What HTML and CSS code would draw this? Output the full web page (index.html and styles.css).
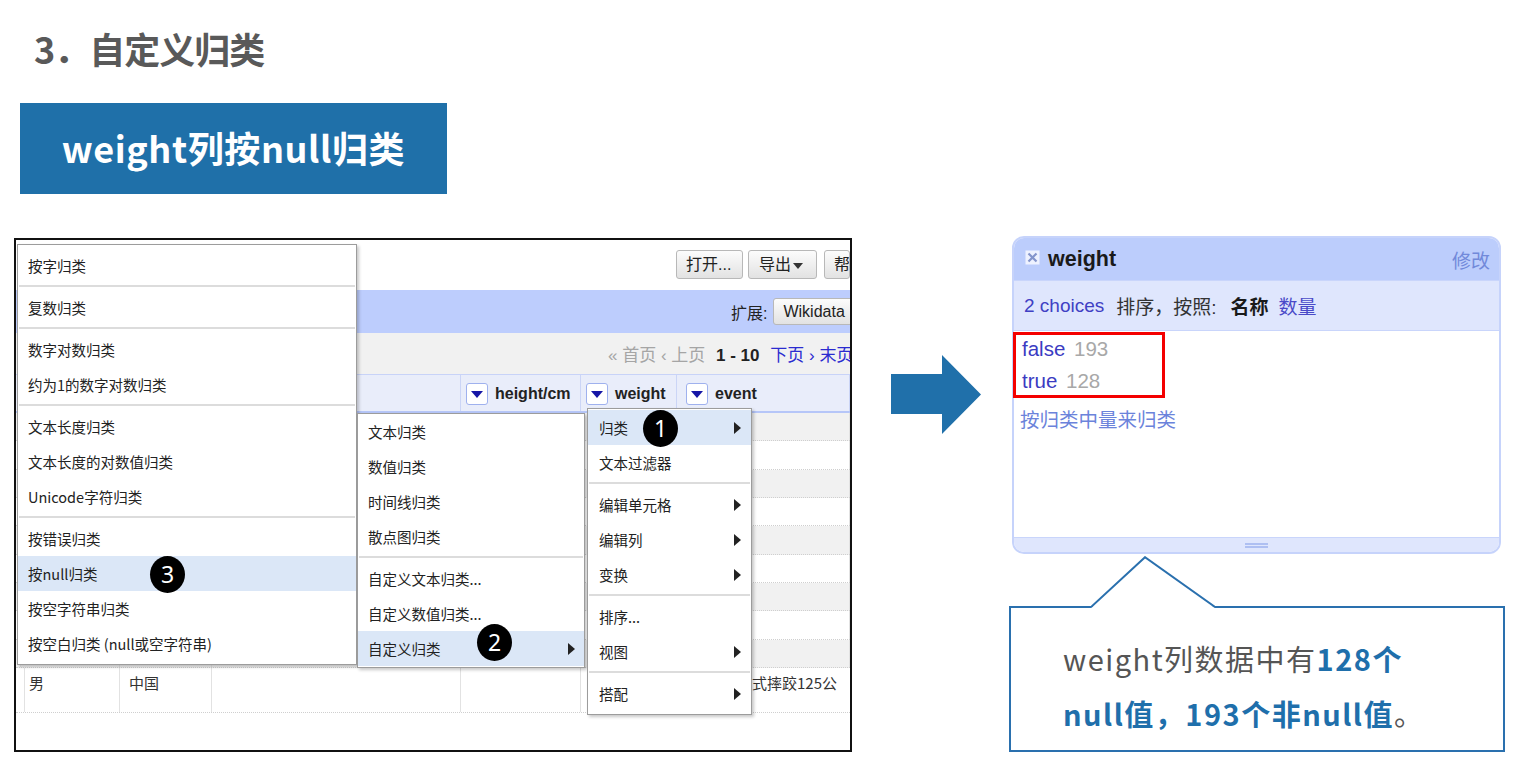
FILE: index.html
```html
<!DOCTYPE html>
<html lang="zh-CN">
<head>
<meta charset="utf-8">
<title>自定义归类</title>
<link rel="stylesheet" href="styles.css">
</head>
<body>
<div class="slide">
  <h1 class="title">3．自定义归类</h1>
  <div class="banner">weight列按null归类</div>
  <div class="main">
    <div class="shot">
      <div class="toolbar">
        <span class="btn b-open">打开...</span>
        <span class="btn b-export">导出 <i class="caret"></i></span>
        <span class="btn b-help">帮助</span>
      </div>
      <div class="extbar"><span>扩展:</span><span class="btn wd">Wikidata</span></div>
      <div class="pager"><span class="dim">« 首页 ‹ 上页</span> <b class="range">1 - 10</b> <span class="lnk">下页 ›</span> <span class="lnk">末页 »</span></div>
      <div class="thead cols">
        <div class="c"></div><div class="c"></div><div class="c"></div><div class="c"></div>
        <div class="c h4"><span class="dd"><i></i></span>height/cm</div>
        <div class="c h5"><span class="dd"><i></i></span>weight</div>
        <div class="c h6"><span class="dd"><i></i></span>event</div>
      </div>
      <div class="row cols odd"><div class="c"></div><div class="c"></div><div class="c"></div><div class="c"></div><div class="c"></div><div class="c"></div><div class="c"></div></div>
      <div class="row cols"><div class="c"></div><div class="c"></div><div class="c"></div><div class="c"></div><div class="c"></div><div class="c"></div><div class="c"></div></div>
      <div class="row cols odd"><div class="c"></div><div class="c"></div><div class="c"></div><div class="c"></div><div class="c"></div><div class="c"></div><div class="c"></div></div>
      <div class="row cols"><div class="c"></div><div class="c"></div><div class="c"></div><div class="c"></div><div class="c"></div><div class="c"></div><div class="c"></div></div>
      <div class="row cols odd"><div class="c"></div><div class="c"></div><div class="c"></div><div class="c"></div><div class="c"></div><div class="c"></div><div class="c"></div></div>
      <div class="row cols"><div class="c"></div><div class="c"></div><div class="c"></div><div class="c"></div><div class="c"></div><div class="c"></div><div class="c"></div></div>
      <div class="row cols odd"><div class="c"></div><div class="c"></div><div class="c"></div><div class="c"></div><div class="c"></div><div class="c"></div><div class="c"></div></div>
      <div class="row cols"><div class="c"></div><div class="c"></div><div class="c"></div><div class="c"></div><div class="c"></div><div class="c"></div><div class="c"></div></div>
      <div class="row cols odd"><div class="c"></div><div class="c"></div><div class="c"></div><div class="c"></div><div class="c"></div><div class="c"></div><div class="c"></div></div>
      <div class="row cols last"><div class="c"></div><div class="c">男</div><div class="c">中国</div><div class="c"></div><div class="c"></div><div class="c"></div><div class="c ev">男子自由式摔跤125公斤级</div></div>

      <div class="menu m1">
        <div class="item">按字归类</div>
        <div class="sep"></div>
        <div class="item">复数归类</div>
        <div class="sep"></div>
        <div class="item">数字对数归类</div>
        <div class="item">约为1的数字对数归类</div>
        <div class="sep"></div>
        <div class="item">文本长度归类</div>
        <div class="item">文本长度的对数值归类</div>
        <div class="item">Unicode字符归类</div>
        <div class="sep"></div>
        <div class="item">按错误归类</div>
        <div class="item hl">按null归类<span class="badge bg3">3</span></div>
        <div class="item">按空字符串归类</div>
        <div class="item">按空白归类 (null或空字符串)</div>
      </div>

      <div class="menu m2">
        <div class="item">文本归类</div>
        <div class="item">数值归类</div>
        <div class="item">时间线归类</div>
        <div class="item">散点图归类</div>
        <div class="sep"></div>
        <div class="item">自定义文本归类...</div>
        <div class="item">自定义数值归类...</div>
        <div class="item hl">自定义归类<span class="badge bg2">2</span><span class="tri"></span></div>
      </div>

      <div class="menu m3">
        <div class="item hl">归类<span class="badge bg1">1</span><span class="tri"></span></div>
        <div class="item">文本过滤器</div>
        <div class="sep"></div>
        <div class="item">编辑单元格<span class="tri"></span></div>
        <div class="item">编辑列<span class="tri"></span></div>
        <div class="item">变换<span class="tri"></span></div>
        <div class="sep"></div>
        <div class="item">排序...</div>
        <div class="item">视图<span class="tri"></span></div>
        <div class="sep"></div>
        <div class="item">搭配<span class="tri"></span></div>
      </div>
    </div>

    <svg class="arrow" width="90" height="80" viewBox="0 0 90 80"><polygon points="0,19 51,19 51,0 90,39.5 51,79 51,59 0,59" fill="#2070aa"/></svg>

    <div class="side">
      <div class="facet">
        <div class="facet-head">
          <svg class="close" width="15" height="15" viewBox="0 0 15 15"><rect x="0.5" y="0.5" width="14" height="14" fill="#eef2ff"/><path d="M3.5 3.5 L11.5 11.5 M11.5 3.5 L3.5 11.5" stroke="#8495cc" stroke-width="2.2"/></svg>
          <span class="fname">weight</span>
          <span class="edit">修改</span>
        </div>
        <div class="facet-controls">
          <span class="lk">2 choices</span>
          <span class="sort">排序，按照:</span>
          <b class="by">名称</b>
          <span class="lk2">数量</span>
        </div>
        <div class="facet-body">
          <div class="choice"><span class="cv">false</span> <span class="cn">193</span></div>
          <div class="choice"><span class="cv">true</span> <span class="cn">128</span></div>
          <div class="cluster">按归类中量来归类</div>
        </div>
        <div class="facet-foot"><span class="grip"></span></div>
        <div class="redbox"></div>
      </div>
      <div class="callout">
        <svg class="pointer" width="124" height="52" viewBox="0 0 124 52"><polygon points="0,52 54,1 124,52" fill="#fff"/><polyline points="0,51 54,1.2 124,51" fill="none" stroke="#2a70ae" stroke-width="2"/></svg>
        <p class="ctext">weight列数据中有<b class="hb">128个</b><br><b class="hb">null值，193个非null值</b>。</p>
      </div>
    </div>
  </div>
</div>
</body>
</html>
```

FILE: styles.css
```css
* { box-sizing: border-box; }
body {
  margin: 0;
  background: #fff;
  width: 1514px;
  height: 757px;
  overflow: hidden;
  font-family: "Noto Sans CJK SC", sans-serif;
}
.slide { width: 1514px; height: 757px; }

.title {
  margin: 0;
  padding: 25px 0 0 34px;
  height: 71px;
  font: bold 36px/46px "Noto Sans CJK SC", sans-serif;
  color: #595959;
  letter-spacing: -1px;
}
.banner {
  margin: 32px 0 0 20px;
  width: 427px;
  height: 91px;
  background: #1f70a9;
  color: #fff;
  font: bold 36px/89px "Noto Sans CJK SC", sans-serif;
  letter-spacing: 0.6px;
  text-align: center;
}
.main {
  display: flex;
  align-items: flex-start;
  margin-top: 44px;
}

/* screenshot */
.shot {
  flex: none;
  margin-left: 14px;
  width: 838px;
  height: 514px;
  border: 2px solid #111;
  position: relative;
  overflow: hidden;
  font-family: "Liberation Sans", "Noto Sans CJK SC", sans-serif;
  color: #222;
}
.toolbar {
  height: 50px;
  display: flex;
  padding: 10px 0 0 660px;
  white-space: nowrap;
}
.btn {
  flex: none;
  display: inline-block;
  height: 29px;
  border: 1px solid #b8b8b8;
  border-radius: 3px;
  background: linear-gradient(#fcfcfc, #e2e2e2);
  font-size: 16px;
  line-height: 27px;
  color: #222;
  padding: 0 9px;
  white-space: nowrap;
}
.b-open { width: 67px; padding: 0 0 0 9px; }
.b-export { width: 69px; margin-left: 5px; padding: 0 0 0 10px; }
.b-help { margin-left: 7px; width: 26px; padding: 0 0 0 9px; overflow: hidden; }
.caret {
  display: inline-block;
  vertical-align: middle;
  border-top: 6px solid #333;
  border-left: 5px solid transparent;
  border-right: 5px solid transparent;
  margin-left: -2px;
}
.extbar {
  height: 43px;
  background: #bdcdfd;
  display: flex;
  align-items: center;
  padding-left: 715px;
  gap: 6px;
  font-size: 16px;
  white-space: nowrap;
}
.wd { height: 27px; line-height: 25px; padding: 0 9px; }
.pager {
  height: 41px;
  background: #f1f1f1;
  padding: 4px 0 0 592px;
  font-size: 17px;
  line-height: 37px;
  white-space: nowrap;
  color: #a5a5a5;
}
.range { color: #222; margin: 0 6px; }
.lnk { color: #2b2bd0; }

.cols {
  display: grid;
  grid-template-columns: 5px 99px 92px 249px 120px 96px 173px;
}
.thead {
  height: 39px;
  background: #e9edfa;
  border-top: 1px solid #c8d3f8;
  border-bottom: 2px solid #b6c6f8;
}
.thead .c {
  border-right: 1px solid #cbd5f6;
  display: flex;
  align-items: center;
  gap: 7px;
  padding-top: 2px;
  font-weight: bold;
  font-size: 16px;
  color: #222;
  white-space: nowrap;
}
.h4 { padding-left: 5px; }
.h5 { padding-left: 5px; }
.h6 { padding-left: 9px; }
.dd {
  flex: none;
  width: 22px;
  height: 22px;
  border: 1px solid #9fb1ee;
  border-radius: 3px;
  background: #fff;
  display: inline-flex;
  align-items: center;
  justify-content: center;
}
.dd i {
  display: block;
  border-top: 7px solid #1616a6;
  border-left: 6px solid transparent;
  border-right: 6px solid transparent;
}
.row {
  height: 28.33px;
  border-bottom: 1px dotted #cfcfcf;
  background: #fff;
}
.row.odd { background: #f1f1f1; }
.row .c { border-right: 1px solid #e2e2e2; }
.row.last { height: 45px; }
.last .c {
  font: 15px/18px "Noto Sans CJK SC", sans-serif;
  color: #333;
  padding: 6px 0 0 8px;
}
.last .c:nth-child(3) { padding-left: 9px; }
.last .c.ev { padding-left: 15px; padding-right: 10px; border-right: 0; }

/* menus */
.menu {
  position: absolute;
  background: #fff;
  border: 1px solid #9c9c9c;
  box-shadow: 2px 2px 3px rgba(0, 0, 0, 0.22);
  font: 14.5px "Noto Sans CJK SC", sans-serif;
  color: #222;
}
.m1 { left: 1px; top: 4px; width: 340px; height: 421px; padding-top: 3px; }
.m2 { left: 341px; top: 173px; width: 228px; height: 255px; padding-top: 0; }
.m3 { left: 571px; top: 168px; width: 165px; height: 307px; padding-top: 1px; }
.item {
  position: relative;
  height: 35px;
  display: flex;
  align-items: center;
  padding-left: 10px;
  white-space: nowrap;
}
.m3 .item { padding-left: 11px; }
.item.hl { background: #dbe7f7; }
.sep {
  height: 2px;
  background: #dcdcdc;
  margin: 2px 1px 3px;
}
.tri {
  margin-left: auto;
  margin-right: 9px;
  border-left: 7px solid #222;
  border-top: 6px solid transparent;
  border-bottom: 6px solid transparent;
}
.m3 .tri { margin-right: 10px; }
.badge {
  position: absolute;
  width: 35px;
  height: 37px;
  border-radius: 50%;
  background: #000;
  color: #fff;
  font: 23px/37px "Noto Sans", sans-serif;
  text-align: center;
}
.bg1 { left: 55px; top: 0; }
.bg2 { left: 119px; top: -7px; }
.bg3 { left: 132px; top: 0; }

/* arrow */
.arrow { flex: none; margin: 117px 0 0 39px; }

/* right side */
.side {
  flex: none;
  width: 496px;
  margin: -2px 0 0 28px;
}
.facet {
  position: relative;
  margin-left: 3px;
  width: 489px;
  height: 318px;
  border: 2px solid #c6d3fb;
  border-radius: 12px;
  background: #fff;
  display: flex;
  flex-direction: column;
  font-family: "Liberation Sans", "Noto Sans CJK SC", sans-serif;
}
.facet-head {
  height: 42px;
  flex: none;
  background: #bccdfc;
  border-radius: 10px 10px 0 0;
  display: flex;
  align-items: center;
  padding: 0 9px 0 11px;
}
.close { flex: none; margin-top: -3px; }
.fname {
  margin-left: 8px;
  font-weight: bold;
  font-size: 21.5px;
  color: #1a1a1a;
}
.edit {
  margin-left: auto;
  font: 19px "Noto Sans CJK SC", sans-serif;
  color: #7189da;
}
.facet-controls {
  height: 50px;
  flex: none;
  background: #dfe6fd;
  border-top: 1px solid #c9d5fb;
  display: flex;
  align-items: center;
  padding-left: 10px;
  font-size: 19px;
  white-space: nowrap;
}
.lk { color: #4040c4; }
.sort { margin-left: 12px; color: #333; }
.by { margin-left: 14px; color: #1a1a1a; }
.lk2 { margin-left: 10px; color: #4a4ac8; }
.facet-body {
  flex: 1;
  padding-top: 2px;
  border-top: 1px solid #c9d5fb;
}
.choice {
  padding-left: 8px;
  font-size: 20.5px;
  line-height: 32px;
}
.cv { color: #3b3bc2; }
.cn { color: #a8a8a8; margin-left: 3px; }
.cluster {
  margin-top: 6px;
  padding-left: 6px;
  font: 19.5px/32px "Noto Sans CJK SC", sans-serif;
  color: #6b83db;
}
.facet-foot {
  height: 15px;
  flex: none;
  background: #dfe6fd;
  border-top: 1px solid #c9d5fb;
  border-radius: 0 0 10px 10px;
  display: flex;
  align-items: center;
  justify-content: center;
}
.grip {
  width: 23px;
  height: 5px;
  border-top: 2px solid #aebff2;
  border-bottom: 2px solid #aebff2;
}
.redbox {
  position: absolute;
  left: -1px;
  top: 94px;
  width: 152px;
  height: 66px;
  border: 3px solid #f40000;
}

.callout {
  position: relative;
  margin-top: 52px;
  width: 496px;
  height: 146px;
  border: 2px solid #2a70ae;
  padding: 23px 0 0 52px;
}
.pointer {
  position: absolute;
  left: 80px;
  top: -52px;
}
.ctext {
  margin: 0;
  font: 29px/55px "Noto Sans CJK SC", sans-serif;
  letter-spacing: 1.5px;
  color: #555;
  white-space: nowrap;
}
.hb { color: #1f6fab; font-weight: bold; }
```
